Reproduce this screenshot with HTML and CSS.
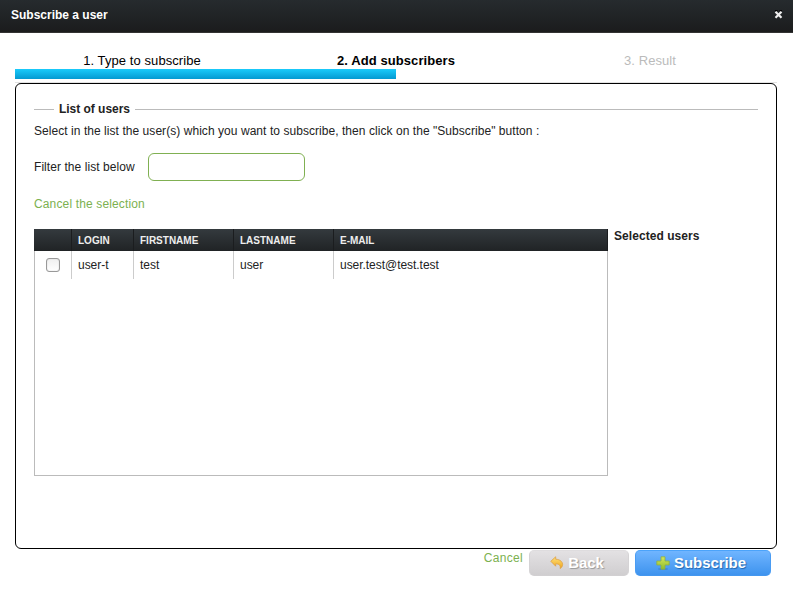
FILE: index.html
```
<!DOCTYPE html>
<html lang="en">
<head>
<meta charset="utf-8">
<title>Subscribe a user</title>
<link rel="stylesheet" href="styles.css">
</head>
<body>
<header class="titlebar">
  <span>Subscribe a user</span>
  <svg class="close" width="9" height="9" viewBox="0 0 9 9"><path d="M1 .5h2.5M5.5.5H8" stroke="#000"/><path d="M1.5 1.7 7.5 7.7M7.5 1.7 1.5 7.7" stroke="#eee" stroke-width="2.2"/></svg>
</header>
<main class="wizard">
  <ol class="steps">
    <li>1. Type to subscribe</li>
    <li class="current">2. Add subscribers</li>
    <li class="todo">3. Result</li>
  </ol>
  <div class="progress"></div>
  <section class="panel">
    <h2 class="legend">List of users</h2>
    <p class="intro">Select in the list the user(s) which you want to subscribe, then click on the "Subscribe" button :</p>
    <div class="filter"><label for="filter">Filter the list below</label><input id="filter" type="text"></div>
    <a class="link reset">Cancel the selection</a>
    <div class="lists">
      <div class="users">
        <div class="row head"><span></span><span>LOGIN</span><span>FIRSTNAME</span><span>LASTNAME</span><span>E-MAIL</span></div>
        <div class="row data"><span><i class="check"></i></span><span>user-t</span><span>test</span><span>user</span><span>user.test@test.test</span></div>
      </div>
      <h3 class="selected">Selected users</h3>
    </div>
  </section>
  <footer class="actions">
    <a class="link cancel">Cancel</a>
    <button class="btn back">
      <svg width="14" height="14" viewBox="0 0 14 14"><defs><linearGradient id="gold" x1="0" y1="0" x2="0" y2="1"><stop offset="0" stop-color="#ffe27a"/><stop offset="1" stop-color="#efa51d"/></linearGradient></defs><path d="M.8 5.3 5.7.8v2.4c4.4.1 7.6 3 6.8 6.3-.3 1.3-1.2 2.4-2.4 3 .7-2.8-.7-4.6-4.4-4.7v2.4z" fill="url(#gold)" stroke="#dda043" stroke-width=".8"/></svg>
      <span>Back</span>
    </button>
    <button class="btn subscribe">
      <svg width="14" height="14" viewBox="0 0 14 14"><defs><linearGradient id="lime" x1="0" y1="0" x2="0" y2="1"><stop offset="0" stop-color="#d5e75c"/><stop offset="1" stop-color="#8fbd2b"/></linearGradient></defs><ellipse cx="7" cy="13" rx="5" ry="1" fill="#2765a0" opacity=".35"/><path d="M5 .8h4V5h4.2v4H9v4.2H5V9H.8V5H5z" fill="url(#lime)" stroke="#8cad48" stroke-width=".8"/></svg>
      <span>Subscribe</span>
    </button>
  </footer>
</main>
</body>
</html>
```
FILE: styles.css
```
* { box-sizing: border-box; }
body { margin: 0; background: #fff; color: #222; font: 12px/16px "Liberation Sans", Arial, sans-serif; }
h2, h3, p, ol { margin: 0; padding: 0; font-size: 12px; }
.titlebar { display: flex; justify-content: space-between; height: 33px; padding: 7px 10px 0 11px; background: linear-gradient(#262b2e, #1b1c1d) 0 0 / 100% 32px no-repeat; border-bottom: 1px solid #333; color: #fff; font-weight: bold; }
.close { margin-top: 3px; }
.wizard { width: 762px; margin: 20px 0 0 15px; }
.steps { display: grid; grid-template-columns: repeat(3, 1fr); height: 16px; list-style: none; font-size: 13px; text-align: center; color: #000; letter-spacing: .08px; }
.current { font-weight: bold; }
.todo { color: #bbb; }
.progress { height: 14px; background: linear-gradient(#1acbfb, #0399d1) 0 0 / 381px 10px no-repeat; border-bottom: 1px solid #e2e2e2; }
.panel { height: 466px; padding: 17px 18px 0; border: 1px solid #000; border-radius: 6px; }
.legend { display: flex; align-items: center; gap: 5px; height: 16px; letter-spacing: -.03px; }
.legend::before, .legend::after { content: ""; height: 1px; background: #bbb; margin-top: 1px; }
.legend::before { width: 20px; }
.legend::after { flex: 1; }
.intro { margin-top: 6px; letter-spacing: .053px; }
.filter { display: flex; align-items: center; margin-top: 14px; height: 28px; }
.filter label { width: 114px; letter-spacing: .06px; }
.filter input { width: 157px; height: 28px; border: 1px solid #80b052; border-radius: 6px; background: #fff; }
.link { color: #7cb14f; }
.reset { display: block; margin-top: 15px; letter-spacing: .14px; }
.lists { display: flex; gap: 6px; margin-top: 17px; }
.users { width: 574px; height: 247px; border: 1px solid #bbb; border-top: 0; }
.row { display: grid; grid-template-columns: 37px 62px 100px 100px 1fr; }
.row span { padding-left: 6px; border-right: 1px solid #ccc; }
.head { height: 22px; margin: 0 -1px; grid-template-columns: 38px 62px 100px 100px 1fr; background: linear-gradient(#343a3e, #202325); color: #eee; font-size: 10px; font-weight: bold; line-height: 24px; }
.head span { height: 22px; border-color: #1b1d1f; }
.data { height: 28px; line-height: 28px; letter-spacing: -.04px; }
.data span:first-child { padding: 7px 0 0 11px; }
.data span:last-child { border: 0; }
.check { display: block; width: 14px; height: 14px; border: 1px solid #999; border-radius: 3px; background: linear-gradient(#f0f0f0, #fff); box-shadow: inset 0 0 1px #aaa; }
.selected { margin-top: -1px; letter-spacing: .06px; }
.actions { display: flex; justify-content: flex-end; gap: 6px; padding: 1px 6px 0 0; }
.cancel { letter-spacing: .3px; }
.btn { display: flex; align-items: center; justify-content: center; gap: 4px; height: 26px; padding: 0 4px 0 0; border: 1px solid; border-radius: 5px; color: #fff; font: bold 15px/18px "Liberation Sans", Arial, sans-serif; letter-spacing: -.08px; }
.back { width: 100px; background: linear-gradient(#e3e1e3, #d0ced0); border-color: #dedcde #d5d3d5 #d2d0d2; text-shadow: 1px 1px 1px #999; }
.subscribe { width: 136px; background: linear-gradient(#70b5ff, #3e93ee); border-color: #4ba3fa #4a9cf3 #4497ef; text-shadow: 1px 1px 1px #2567ae; }
```
